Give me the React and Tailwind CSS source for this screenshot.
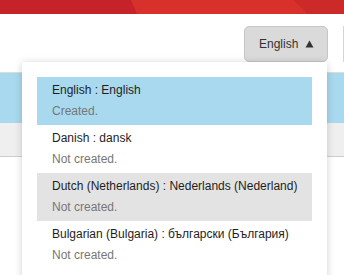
import React from "react";

const langs = [
  { name: "English : English", status: "Created.", state: "selected" },
  { name: "Danish : dansk", status: "Not created." },
  { name: "Dutch (Netherlands) : Nederlands (Nederland)", status: "Not created.", state: "hover" },
  { name: "Bulgarian (Bulgaria) : български (България)", status: "Not created." },
];

function RedBar() {
  // header stripe with the two slanted lighter panels
  return (
    <svg width="344" height="14" viewBox="0 0 344 14" className="block">
      <rect width="344" height="14" fill="#c52329" />
      <polygon points="131,0 294,0 308,14 137,14" fill="#d8302b" />
      <polygon points="294,0 344,0 344,14 308,14" fill="#cb2a28" />
    </svg>
  );
}

export default function App() {
  return (
    <div
      className="relative w-[344px] h-[275px] overflow-hidden bg-white"
      style={{ fontFamily: '"Liberation Sans", Arial, sans-serif' }}
    >
      <RedBar />

      {/* toolbar */}
      <div className="flex justify-end items-start h-[59px] pt-[12px] border-b border-[#dcdcdc]">
        <button className="flex items-center h-[36px] w-[84px] pl-[14px] pr-[13px] rounded-[5px] bg-[#dadada] border border-[#c6c6c6] text-[12px] text-[#333]">
          <span>English</span>
          <svg width="9" height="8" viewBox="0 0 9 8" className="ml-auto">
            <polygon points="4.5,0.5 8.5,7.5 0.5,7.5" fill="#333" />
          </svg>
        </button>
        <div className="w-px h-[36px] ml-[15px] bg-[#d6d6d6]" />
      </div>

      {/* page content behind the menu */}
      <div className="h-[50px] bg-[#a9d9ee]" />
      <div className="h-[34px] bg-[#efefef] border-b border-[#cfcfcf]" />

      {/* dropdown menu */}
      <div className="absolute left-[22px] top-[62px] w-[305px] h-[240px] bg-white shadow-[0_1px_8px_rgba(0,0,0,0.18)] px-[15px] pt-[15px]">
        {langs.map((l) => (
          <div
            key={l.name}
            className={
              "h-[48px] px-[15px] pt-[5px] " +
              (l.state === "selected" ? "bg-[#a9d9ee]" : l.state === "hover" ? "bg-[#e3e3e3]" : "")
            }
          >
            <div className="text-[12px] leading-[16px] text-[#1e1e1e] whitespace-nowrap">{l.name}</div>
            <div className="mt-[5px] text-[12px] leading-[16px] text-[#777]">{l.status}</div>
          </div>
        ))}
      </div>
    </div>
  );
}
